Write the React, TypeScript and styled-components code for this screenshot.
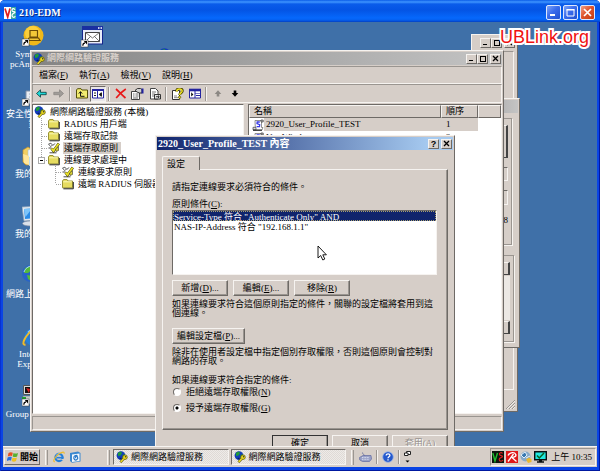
import React, { useState } from "react";
import styled, { createGlobalStyle, css } from "styled-components";

const FACE = "#d6cec8";
const DARK = "#6e6a66";
const SHADOW = "#9a9590";
const LIGHT = "#f6f3f0";
const NAVY = "#10246c";

const GlobalStyle = createGlobalStyle`
  *, *::before, *::after { box-sizing: border-box; }
  body { margin: 0; background: #fff; }
  body, button, input, select, table {
    font-family: "Liberation Serif", "Noto Sans CJK TC", serif;
    font-size: 9px;
    line-height: 12px;
    color: #000;
  }
  button { margin: 0; padding: 0; border: 0; background: none; }
  svg { display: block; flex: none; }
  p, ul, h1, h2 { margin: 0; padding: 0; }
`;

const raised = css`
  border: 1px solid;
  border-color: ${LIGHT} ${DARK} ${DARK} ${LIGHT};
`;
const sunken = css`
  border: 1px solid;
  border-color: ${DARK} ${LIGHT} ${LIGHT} ${DARK};
`;
const etched = css`
  border: 1px solid;
  border-color: ${SHADOW} ${LIGHT} ${LIGHT} ${SHADOW};
`;

/* ---------- remote viewer frame ---------- */

const Frame = styled.div`
  display: flex;
  flex-direction: column;
  min-height: 100vh;
  padding: 0 3px 4px;
  border-radius: 5px 5px 0 0;
  background: #0a44e4;
  box-shadow: inset 1px 0 #0831d0, inset -1px -1px #0018a0;
`;

const FrameTitle = styled.header`
  display: flex;
  align-items: center;
  gap: 3px;
  height: 22px;
  margin: 0 -3px;
  padding: 3px 5px 0 4px;
  border-radius: 5px 5px 0 0;
  background: linear-gradient(#0a5ce8 0, #3f95ff 2px, #0a5cea 4px, #0454e4 10px, #0668fc 18px, #0560f0 20px, #0340c0 22px);
`;

const FrameName = styled.h1`
  flex: 1;
  color: #fff;
  font-size: 10px;
  line-height: 14px;
  text-shadow: 1px 1px #0a2a80;
`;

const FrameButtons = styled.div`
  display: flex;
  gap: 2px;
`;

const FrameButton = styled.button<{ $close?: boolean }>`
  display: flex;
  align-items: center;
  justify-content: center;
  width: 15px;
  height: 15px;
  border: 1px solid #dfe8fc;
  border-radius: 2px;
  background: ${(p) =>
    p.$close
      ? "linear-gradient(135deg, #f0a088, #e0542c 45%, #c03c10)"
      : "linear-gradient(135deg, #7ea4f8, #3a6cec 45%, #2050d0)"};
`;

/* ---------- desktop ---------- */

const Desktop = styled.main`
  position: relative;
  flex: 1;
  overflow: hidden;
  background: #3f70a8;
`;

const IconColumn = styled.ul`
  display: flex;
  flex-direction: column;
  gap: 4px;
  width: 59px;
  padding: 3px 0 0 1px;
  list-style: none;
`;

const DesktopIcon = styled.li`
  display: flex;
  flex-direction: column;
  align-items: center;
  height: 56px;
  color: #fff;
  line-height: 10px;
  text-align: center;
  gap: 2px;
`;

const IconLabel = styled.span`
  width: 58px;
`;

const MailShortcut = styled.div`
  position: absolute;
  left: 78px;
  top: 4px;
`;

const HiddenShortcut = styled.div`
  position: absolute;
  left: 154px;
  top: 26px;
`;

const Watermark = styled.div`
  position: absolute;
  right: 8px;
  top: 4px;
  color: #f01010;
  font-family: "Liberation Sans", sans-serif;
  font-size: 18px;
  line-height: 22px;
  -webkit-text-stroke: 4px #fff;
  paint-order: stroke fill;
`;

/* ---------- classic windows ---------- */

const Win = styled.section<{ $x: number; $y: number; $w: number; $h?: number }>`
  position: absolute;
  left: ${(p) => p.$x}px;
  top: ${(p) => p.$y}px;
  width: ${(p) => p.$w}px;
  ${(p) => p.$h && `height: ${p.$h}px;`}
  display: flex;
  flex-direction: column;
  padding: 1px;
  background: ${FACE};
  border: 1px solid;
  border-color: ${LIGHT} ${DARK} ${DARK} ${LIGHT};
`;

const WinTitle = styled.header<{ $tone: "active" | "idle" | "plain" }>`
  display: flex;
  align-items: center;
  flex: none;
  height: 13px;
  padding: 0 1px;
  color: ${(p) => (p.$tone === "active" ? "#fff" : FACE)};
  background: ${(p) =>
    p.$tone === "active"
      ? `linear-gradient(90deg, ${NAVY}, #a6caf0 92%)`
      : p.$tone === "idle"
        ? "linear-gradient(90deg, #848484, #c4c4c4)"
        : FACE};
`;

const WinName = styled.h2`
  flex: 1;
  font-size: 10px;
  line-height: 13px;
  white-space: nowrap;
`;

const IdleName = styled(WinName)`
  padding-left: 2px;
  font-size: 9px;
`;

const Caption = styled.button<{ $gap?: boolean }>`
  display: flex;
  align-items: center;
  justify-content: center;
  width: 11px;
  height: 10px;
  margin-left: ${(p) => (p.$gap ? 2 : 0)}px;
  background: ${FACE};
  ${raised}
`;

const HelpCaption = styled(Caption)`
  font-family: "Liberation Sans", sans-serif;
  font-weight: bold;
  line-height: 8px;
`;

const MenuBar = styled.nav`
  display: flex;
  flex: none;
  height: 18px;
  margin-top: 1px;
  ${etched}
`;

const MenuItem = styled.button`
  padding: 0 5px 0 6px;
  white-space: nowrap;
`;

const ToolBar = styled.div`
  display: flex;
  align-items: center;
  flex: none;
  height: 19px;
  margin-bottom: 1px;
  ${etched}
`;

const Tool = styled.button<{ $on?: boolean }>`
  display: flex;
  align-items: center;
  justify-content: center;
  width: ${(p) => (p.$on ? 16 : 17)}px;
  height: 16px;
  ${(p) => p.$on && css`${sunken} background: #e9e6e8;`}
`;

const Divider = styled.span`
  width: 2px;
  height: 14px;
  margin: 0 2px;
  border-left: 1px solid ${SHADOW};
  border-right: 1px solid ${LIGHT};
`;

const Panes = styled.div`
  display: flex;
  flex: 1;
  gap: 4px;
  min-height: 0;
`;

const TreePane = styled.ul`
  flex: none;
  width: 212px;
  padding: 1px 0 0 1px;
  overflow: hidden;
  list-style: none;
  background: #fff;
  ${sunken}
`;

const TreeRow = styled.li`
  display: flex;
  align-items: center;
  height: 12px;
  white-space: nowrap;
`;

const TreeLabel = styled.span<{ $selected?: boolean }>`
  margin-left: 3px;
  padding: 0 3px 0 1px;
  background: ${(p) => (p.$selected ? FACE : "transparent")};
`;

const Indent = styled.span`
  width: 14px;
`;

const ListPane = styled.div`
  flex: 1;
  overflow: hidden;
  background: #fff;
  ${sunken}
`;

const Results = styled.table`
  width: 100%;
  table-layout: fixed;
  border-collapse: separate;
  border-spacing: 0;
  th {
    height: 13px;
    padding: 0 4px;
    font-weight: normal;
    line-height: 11px;
    text-align: left;
    background: ${FACE};
    ${raised}
  }
  td { height: 13px; padding: 0; line-height: 13px; white-space: nowrap; }
`;

const NameHead = styled.th` width: 192px; `;
const OrderHead = styled.th` width: 37px; `;

const NameCell = styled.div`
  display: flex;
  align-items: center;
  padding-left: 3px;
`;

const CellText = styled.div<{ $selected?: boolean; $inset?: boolean }>`
  flex: 1;
  overflow: hidden;
  padding-left: ${(p) => (p.$inset ? 5 : 2)}px;
  background: ${(p) => (p.$selected ? FACE : "transparent")};
`;

const StatusBar = styled.footer`
  flex: none;
  height: 14px;
  margin-top: 2px;
  ${etched}
`;

/* ---------- background windows ---------- */

const BackBody = styled.div`
  flex: 1;
  margin: 2px 2px 20px;
  ${etched}
`;

const GripCorner = styled.div`
  position: absolute;
  right: 2px;
  bottom: 2px;
`;

const Group = styled.div<{ $h: number; $end?: number }>`
  display: flex;
  flex-direction: column;
  align-items: flex-end;
  flex: none;
  gap: ${(p) => (p.$h > 100 ? 9 : 1)}px;
  height: ${(p) => p.$h}px;
  margin: 5px ${(p) => p.$end ?? 5}px 5px 0;
  padding: 6px 3px 0 0;
  border: 1px solid ${SHADOW};
  box-shadow: 1px 1px ${LIGHT};
`;

const FieldEdge = styled.div<{ $h: number; $kind: "button" | "field" | "track" }>`
  flex: none;
  width: 40px;
  height: ${(p) => p.$h}px;
  ${(p) => (p.$kind === "button" ? raised : sunken)}
  ${(p) => p.$kind === "button" && "border-right: 2px solid #444; border-bottom: 1px solid #444;"}
  ${(p) => p.$kind === "track" && "background: #ece8e4; border-color: #ece8e4;"}
`;

/* ---------- dialog ---------- */

const DialogBody = styled.div`
  display: flex;
  flex-direction: column;
  align-items: stretch;
  padding: 6px 5px 5px;
`;

const Tab = styled.button`
  position: relative;
  align-self: flex-start;
  width: 38px;
  height: 14px;
  margin-bottom: -1px;
  padding-left: 4px;
  text-align: left;
  background: ${FACE};
  border: 1px solid;
  border-color: ${LIGHT} ${DARK} transparent ${LIGHT};
  border-bottom: 0;
  border-radius: 2px 2px 0 0;
`;

const TabPage = styled.div`
  display: flex;
  flex-direction: column;
  padding: 11px 10px 15px 9px;
  ${raised}
  box-shadow: inset -1px -1px ${SHADOW};
`;

const Prompt = styled.p`
  margin-bottom: 5px;
`;

const ListBox = styled.select`
  appearance: none;
  display: block;
  width: 100%;
  height: 65px;
  margin: 0 0 5px;
  padding: 0;
  overflow: hidden;
  outline: none;
  border-radius: 0;
  background: #fff;
  ${sunken}
  option {
    display: flex;
    align-items: center;
    height: 10px;
    min-height: 0;
    padding: 0 1px;
    font-size: 9px;
  }
  option:checked {
    color: #fff;
    background: linear-gradient(${NAVY}, ${NAVY});
    outline: 1px dotted #a8a070;
    outline-offset: -1px;
  }
`;

const ButtonRow = styled.div`
  display: flex;
  gap: 5px;
`;

const PushButton = styled.button<{ $wide?: boolean; $main?: boolean }>`
  width: ${(p) => (p.$wide ? 73 : 56)}px;
  height: 16px;
  text-align: center;
  white-space: nowrap;
  background: ${FACE};
  ${raised}
  box-shadow: inset -1px -1px ${SHADOW};
  ${(p) => p.$main && "outline: 1px solid #333; outline-offset: -1px;"}
  &:disabled { color: ${SHADOW}; text-shadow: 1px 1px #fff; }
`;

const Note = styled.p<{ $after: number }>`
  margin: 4px 0 ${(p) => p.$after}px;
  line-height: 9px;
`;

const Choices = styled.fieldset`
  display: flex;
  flex-direction: column;
  gap: 4px;
  margin: 4px 0 0;
  padding: 0;
  border: 0;
  legend { padding: 0; }
`;

const Choice = styled.label`
  display: flex;
  align-items: center;
  gap: 5px;
  height: 12px;
  padding-left: 1px;
`;

const Radio = styled.input`
  appearance: none;
  width: 8px;
  height: 8px;
  margin: 0;
  border: 1px solid;
  border-color: ${DARK} #fff #fff ${DARK};
  border-radius: 50%;
  background: #fff;
  &:checked { background: radial-gradient(circle, #000 1px, #fff 2px); }
`;

const Footer = styled.footer`
  display: flex;
  justify-content: flex-end;
  gap: 4px;
  margin-top: 5px;
`;

const Pointer = styled.div`
  position: absolute;
  left: 314px;
  top: 223px;
`;

/* ---------- task bar ---------- */

const TaskBar = styled.footer`
  display: flex;
  align-items: center;
  flex: none;
  height: 21px;
  padding: 0 1px;
  background: ${FACE};
  border-top: 1px solid ${LIGHT};
`;

const StartButton = styled.button`
  display: flex;
  align-items: center;
  gap: 1px;
  width: 36px;
  height: 16px;
  padding-left: 2px;
  font-weight: bold;
  white-space: nowrap;
  ${raised}
`;

const Handle = styled.span`
  flex: none;
  width: 3px;
  height: 15px;
  margin: 0 3px 0 5px;
  border-left: 1px solid ${LIGHT};
  border-right: 1px solid ${SHADOW};
`;

const QuickLaunch = styled.div`
  display: flex;
  gap: 4px;
  width: 51px;
  padding-left: 2px;
`;

const Tasks = styled.div`
  display: flex;
  flex: 0 1 233px;
  gap: 2px;
`;

const TaskButton = styled.button`
  display: flex;
  align-items: center;
  flex: 1;
  gap: 3px;
  height: 16px;
  padding-left: 2px;
  white-space: nowrap;
  background: repeating-conic-gradient(#eeebe8 0 25%, #dfdad6 0 50%) 0 0 / 2px 2px;
  ${sunken}
`;

const IconButton = styled.button`
  display: flex;
`;

const LanguageBar = styled.div`
  display: flex;
  align-items: center;
  gap: 2px;
  padding-left: 2px;
`;

const Spacer = styled.span`
  flex: 1;
`;

const Tray = styled.div`
  display: flex;
  align-items: center;
  gap: 2px;
  height: 18px;
  padding: 0 3px 0 1px;
  white-space: nowrap;
  ${etched}
`;

const Clock = styled.time`
  margin-left: 2px;
`;

/* ---------- drawings ---------- */

const MinMark = () => (
  <svg width="7" height="7"><path d="M1 5h4v1H1z" fill="#000" /></svg>
);
const MaxMark = () => (
  <svg width="8" height="8"><path d="M1 1h6v1H1zM1 1h1v6H1zM6 1h1v6H6zM1 6h6v1H1z" fill="#000" /></svg>
);
const CloseMark = () => (
  <svg width="7" height="7"><path d="M1 1l5 5M6 1L1 6" stroke="#000" strokeWidth="1.3" /></svg>
);

const GlobeKey = ({ size = 12 }: { size?: number }) => (
  <svg width={size} height={size} viewBox="0 0 12 12">
    <circle cx="5" cy="4.6" r="4.4" fill="#123cb8" />
    <path d="M2 1.8L5 .6l1 1.6-1.5 2.2L2 5zM6.5 4l2.4-.8L9 5.5 7 7z" fill="#1f9c38" />
    <path d="M3 7.5l2-1 1 2z" fill="#0a1c60" />
    <circle cx="9" cy="6.2" r="2.3" fill="#e8d820" stroke="#5c5400" strokeWidth=".7" />
    <path d="M7.7 7.6L4.4 11.2" stroke="#5c5400" strokeWidth="2.4" />
    <path d="M7.8 7.5L4.6 11" stroke="#f0e030" strokeWidth="1.3" />
    <circle cx="9.6" cy="5.7" r=".7" fill="#333" />
  </svg>
);

const Folder = () => (
  <svg width="12" height="12" viewBox="0 0 12 12">
    <path d="M.5 3L1.5 1.5h3.5L6 3h4.5v6.8H.5z" fill="#e6dc60" stroke="#9a9434" />
    <path d="M1.2 3.8h8.6" stroke="#fbf8b8" />
    <path d="M11.3 4v6.8H1.4" stroke="#222" fill="none" />
  </svg>
);

const PolicyIcon = () => (
  <svg width="12" height="12" viewBox="0 0 12 12">
    <path d="M.5 2l2.5-.8 1.500 2-2 1.300z" fill="#fff" stroke="#444" strokeWidth=".8" />
    <path d="M.5 6h3M1.500 10.800h7" stroke="#333" strokeWidth=".9" />
    <path d="M3.500 6.500l2 2.500L10.800 1.500" fill="none" stroke="#4d4800" strokeWidth="2.800" />
    <path d="M3.600 6.600l1.900 2.200L10.600 1.700" fill="none" stroke="#ece428" strokeWidth="1.700" />
    <path d="M7.500 7l3-2.500v4l-2.500 1z" fill="#d8d030" stroke="#333" strokeWidth=".6" />
    <path d="M5 3.500l1.800-2" stroke="#222" strokeWidth=".9" />
  </svg>
);

const ScrollIcon = () => (
  <svg width="12" height="12" viewBox="0 0 12 12">
    <path d="M3 1.5h7.500l-1 1.500v5.500h1.500l-1 2.500H1.500l1.800-2z" fill="#fff" stroke="#777" strokeWidth=".8" />
    <path d="M9 1h2.200v2H9z" fill="#ccc" stroke="#333" strokeWidth=".7" />
    <path d="M1 8.300h3v2.500H1z" fill="#ddd" stroke="#444" strokeWidth=".7" />
    <path d="M7.800 3H5.200L5 4.500l2.700 1.200-.2 2H4.600" fill="none" stroke="#3a3ae8" strokeWidth="1.300" />
    <path d="M1 11.200h9" stroke="#111" />
  </svg>
);

const Branch = ({ last, box }: { last?: boolean; box?: boolean }) => (
  <svg width="14" height="12">
    <path d={`M7.5 0V${last ? 6 : 12}M8 6.5h6`} stroke="#a4a4a4" strokeDasharray="1 1" fill="none" />
    {box && (
      <g>
        <rect x="4.500" y="3.500" width="6" height="6" fill="#fff" stroke="#aaa" />
        <path d="M6 6.500h3" stroke="#000" />
      </g>
    )}
  </svg>
);

const ShortcutArrow = () => (
  <g>
    <rect x="0" y="14" width="7" height="7" fill="#fff" stroke="#333" strokeWidth=".5" />
    <path d="M1.800 19.800C1.800 17.500 2.800 17 4 16.800" fill="none" stroke="#000" strokeWidth="1.200" />
    <path d="M2.800 15h3.200v3.400z" fill="#000" />
  </g>
);

const PcIcon = () => (
  <svg width="22" height="22" viewBox="0 0 22 22">
    <circle cx="11.500" cy="10.500" r="10" fill="#f0b818" />
    <circle cx="10.500" cy="8.500" r="7.500" fill="#ffd84a" opacity=".7" />
    <path d="M8 5.500h7.500v6.500H8zM5.500 15.500L7 13h9.500l1.500 2.500z" fill="#f2c838" stroke="#6b4c08" strokeWidth="1.200" />
    <ShortcutArrow />
  </svg>
);

const MailIcon = () => (
  <svg width="22" height="22" viewBox="0 0 22 22">
    <rect x="1.500" y=".500" width="20" height="17.500" fill="#e8ecf8" stroke="#15258c" />
    <path d="M1 0h21v4H1z" fill="#1a2fa0" />
    <path d="M17 1.200h1.500v1.500H17zM19.500 1.200H21v1.500h-1.500z" fill="#fff" />
    <path d="M4.500 6.500h14v9h-14z" fill="#fff" stroke="#444" />
    <path d="M4.500 6.500l7 5.500 7-5.500M4.500 15.500l5-5M18.500 15.500l-5-5" fill="none" stroke="#555" strokeWidth=".8" />
    <ShortcutArrow />
  </svg>
);

const SecurityIcon = () => (
  <svg width="22" height="22" viewBox="0 0 22 22">
    <path d="M4 6h14v13H4z" fill="#e9edf3" stroke="#8090a8" />
    <path d="M7 9h8M7 12h8" stroke="#9aa8bc" />
    <ShortcutArrow />
  </svg>
);

const DocsIcon = () => (
  <svg width="22" height="22" viewBox="0 0 22 22">
    <path d="M1 5l5-3 3 2 9 2v13L4 20 1 17z" fill="#f2cf62" stroke="#c89428" strokeWidth=".7" />
    <path d="M6 5l11-3v14L6 19z" fill="#eef6fc" stroke="#9db8cc" strokeWidth=".5" />
    <path d="M1 9l6 2v9l-5-2z" fill="#ffe69a" />
    <path d="M7 12l11-2v9L7 21z" fill="#bcdcf0" />
  </svg>
);

const ComputerIcon = () => (
  <svg width="22" height="22" viewBox="0 0 22 22">
    <path d="M0 2l17-1-1 14L2 16z" fill="#e0e8f0" stroke="#8ea2b8" strokeWidth=".7" />
    <path d="M2 4l13-1-1 10-11 1z" fill="#2c8be6" />
    <path d="M2 4l8-.600L3.500 12z" fill="#7cc4fa" />
    <ellipse cx="8.500" cy="18.500" rx="8" ry="2.500" fill="#dce2ea" stroke="#8a94a4" strokeWidth=".6" />
  </svg>
);

const NetIcon = () => (
  <svg width="22" height="22" viewBox="0 0 22 22">
    <circle cx="8.500" cy="8.500" r="8.500" fill="#2862c8" />
    <path d="M3 3l5-2 2 4-4 3-4 0zM5 10l5 1-1 5-3-2z" fill="#54b83c" />
    <path d="M2 7c1-3 4-6 8-6" stroke="#a8d4fc" strokeWidth="1" fill="none" />
    <path d="M10 12h11v8H10z" fill="#cfdcec" stroke="#607890" />
  </svg>
);

const IeIcon = ({ size = 12 }: { size?: number }) => (
  <svg width={size} height={size} viewBox="0 0 22 22">
    <circle cx="11" cy="12" r="6.600" fill="none" stroke="#2480dc" strokeWidth="4" />
    <path d="M7 12.200h12" stroke="#2480dc" strokeWidth="3" />
    <path d="M13 14.500h8l-1.500 3z" fill={size > 12 ? "#3f70a8" : FACE} />
    <path d="M6 7.500c1.500-2 4-3 6.500-2.700" stroke="#8cc8fa" strokeWidth="1.500" fill="none" />
    <path d="M3.500 19.500C-2 21 4 9 11 5s10-4 9.500 0" fill="none" stroke="#f0bc28" strokeWidth="2" />
  </svg>
);

const GroupIcon = () => (
  <svg width="22" height="22" viewBox="0 0 22 22">
    <path d="M1.500.500h15v9h-15z" fill="#d8d8d8" stroke="#555" />
    <path d="M3 2h12v6H3z" fill="#111" />
    <path d="M4 3l4 1-1 4z" fill="#e02020" />
    <path d="M1 11h18v8H1z" fill="#c8ccc8" stroke="#777" strokeWidth=".5" />
    <path d="M0 13h4" stroke="#20a030" strokeWidth="2" />
    <ShortcutArrow />
  </svg>
);

const Arrow = ({ flip, off }: { flip?: boolean; off?: boolean }) => (
  <svg width="11" height="9" viewBox="0 0 11 9">
    <path
      d={flip ? "M10.500 4.500L6.500.800v2.500H.800v2.400h5.700v2.500z" : "M.500 4.500L4.500.800v2.500h5.700v2.400H4.500v2.500z"}
      fill={off ? "#a09c98" : "#20d8d8"}
      stroke={off ? "#8c8884" : "#083838"}
      strokeWidth=".8"
    />
  </svg>
);

const UpFolder = () => (
  <svg width="12" height="11" viewBox="0 0 12 11">
    <path d="M.500 2L1.500.700h3.500L6 2h5.500v8H.500z" fill="#f2ec70" stroke="#55500a" />
    <path d="M4.500 4v4.300H8.500M2.800 5.600l1.700-2 1.700 2" fill="none" stroke="#111" />
  </svg>
);

const TreeToggle = () => (
  <svg width="12" height="11" viewBox="0 0 12 11">
    <path d="M.500 1.500h11v8.500H.500z" fill="#fff" stroke="#2424a0" />
    <path d="M0 1h12v2H0z" fill="#2424a0" />
    <path d="M5.500 3v7" stroke="#2424a0" />
    <path d="M2 5h2M2 7.500h2M9.500 4.500v4" stroke="#222" />
    <path d="M9 4.500L6.800 6.500 9 8.500z" fill="#111" />
  </svg>
);

const PanelIcon = () => (
  <svg width="12" height="11" viewBox="0 0 12 11">
    <path d="M.500 1.500h11v8.500H.500z" fill="#fff" stroke="#2424a0" />
    <path d="M0 1h12v2H0zM6 5.500h5" fill="#2424a0" stroke="#2424a0" strokeWidth=".6" />
    <path d="M6 3v7M7 7.500h4" stroke="#2424a0" />
    <path d="M2.200 4.300l2.200 2.200-2.200 2z" fill="#111" />
  </svg>
);

const DeleteIcon = () => (
  <svg width="12" height="11" viewBox="0 0 12 11">
    <path d="M1 1c3 2.500 6 6 9.500 9M10.800 1C7 3.500 3.500 7 1.200 10" fill="none" stroke="#e81818" strokeWidth="1.700" />
  </svg>
);

const PropsIcon = () => (
  <svg width="13" height="12" viewBox="0 0 13 12">
    <path d="M.500 3.500h8v8h-8z" fill="#fff" stroke="#444" />
    <path d="M2 6h1.500M4.500 6h3M2 8h1.500M4.500 8h3M2 10h5" stroke="#444" strokeWidth=".8" />
    <path d="M4 2.500L6.500.500h3l1.500 1v3.500H8.500L6 4z" fill="#d0d0d0" stroke="#222" strokeWidth=".9" />
    <path d="M10.500.500h2v5h-2z" fill="#2222a0" />
  </svg>
);

const ExportIcon = () => (
  <svg width="12" height="12" viewBox="0 0 12 12">
    <path d="M1.500.500h5l2.500 2.500v8h-7.500z" fill="#fff" stroke="#444" />
    <path d="M3 4h4M3 6h3M3 8h3" stroke="#555" strokeWidth=".8" />
    <path d="M5.500 6.500h6v4.500h-6z" fill="#ddd" stroke="#222" strokeWidth=".9" />
    <path d="M7 8.700h3M9 7.500l1.300 1.200L9 10" stroke="#111" strokeWidth=".8" fill="none" />
  </svg>
);

const HelpIcon = () => (
  <svg width="12" height="12" viewBox="0 0 12 12">
    <path d="M.500 2.500h7v9h-7z" fill="#fff" stroke="#333" />
    <path d="M2 8h3M2 9.700h4" stroke="#666" strokeWidth=".8" />
    <path d="M4.500 3.600C4.500-.400 11-.200 10.300 3.300 10 4.800 7.600 5 7.600 7" fill="none" stroke="#444000" strokeWidth="2.700" />
    <path d="M4.700 3.500C4.700.300 10.500.300 10.100 3.200 9.800 4.600 7.600 5 7.600 7" fill="none" stroke="#f0e428" strokeWidth="1.500" />
    <circle cx="7.600" cy="9.200" r="1.200" fill="#f0e428" stroke="#444000" strokeWidth=".6" />
  </svg>
);

const MoveMark = ({ down }: { down?: boolean }) => (
  <svg width="8" height="7" viewBox="0 0 8 7">
    <path
      d={down ? "M4 6.800L7.300 3H5.300V.500H2.700V3H.700z" : "M4 .200L.700 4h2v2.500h2.600V4h2z"}
      fill={down ? "#000" : "#8c8884"}
    />
  </svg>
);

const ViewerLogo = () => (
  <svg width="12" height="12" viewBox="0 0 12 12">
    <path d="M0 0h7v12H0z" fill="#fff" />
    <path d="M7 0h5v12H7z" fill="#3aa8a0" />
    <path d="M1 1.500l2.700 8.500L6 1.500" fill="none" stroke="#e02020" strokeWidth="1.700" />
    <path d="M11 2.800C10 .800 7.800 1.500 8 3.500s3 .500 3 1.800c0 1-3 .8-3 3s2.300 2.600 3.300 1" fill="none" stroke="#fff" strokeWidth="1.200" />
  </svg>
);

const FlagIcon = () => (
  <svg width="12" height="12" viewBox="0 0 12 12">
    <path d="M1.500 2c1.500-1 3-1 4.300-.2L5 5.300C3.700 4.600 2.300 4.700.800 5.500z" fill="#e85020" />
    <path d="M6.500 2c1.500.8 3 .7 4.500-.1l-.900 3.600c-1.500.7-3 .7-4.400 0z" fill="#58b030" />
    <path d="M.600 6.400C2 5.700 3.500 5.600 4.800 6.200L4 9.800C2.700 9 1.200 9.200-.200 10z" fill="#2870e0" />
    <path d="M5.500 6.500c1.500.7 3 .7 4.400 0L9 10.100c-1.500.8-3 .7-4.300 0z" fill="#f0c020" />
  </svg>
);

const OutlookIcon = () => (
  <svg width="12" height="12" viewBox="0 0 12 12">
    <path d="M1 2l8-1.500 2.500 1.500v8.500L3 11.700 1 10z" fill="#3a88d0" />
    <path d="M3 3.500l7.500-1v7.500L3 11z" fill="#f4f8fc" />
    <path d="M8.500 4.500C5 3.500 4 7 5.500 8.500s4-.500 3-2.500-2.700 0-1.500 1" fill="none" stroke="#2878c8" strokeWidth="1.200" />
  </svg>
);

const KeyboardIcon = () => (
  <svg width="13" height="12" viewBox="0 0 13 12">
    <path d="M4 1.500c-2 1 2 1.500 1.500 4" fill="none" stroke="#7078a0" />
    <path d="M.500 6.500L4 4.500h8l.500 3.500-2 2.500H3.500L.800 9z" fill="#9aa2c8" stroke="#6068a0" strokeWidth=".7" />
    <path d="M3 6.500h7M3 8.300h7" stroke="#e4e8f8" strokeWidth=".8" strokeDasharray="1 .6" />
  </svg>
);

const HelpBall = () => (
  <svg width="12" height="12" viewBox="0 0 12 12">
    <circle cx="6" cy="6" r="5.300" fill="#2458cc" stroke="#98b4e8" strokeWidth=".8" />
    <path d="M4.200 4.500c0-2.300 3.800-2.200 3.700 0C7.800 5.800 6 5.800 6 7.300M6 8.300v1.300" fill="none" stroke="#fff" strokeWidth="1.300" />
  </svg>
);

const RestoreMenu = () => (
  <svg width="8" height="14" viewBox="0 0 8 14">
    <path d="M2.500 1.500h4v3h-4z" fill="#fff" stroke="#222" />
    <path d="M.500 3h3.500v2.500H.500z" fill="#fff" stroke="#222" />
    <path d="M1.500 10.500h4l-2 2z" fill="#000" />
  </svg>
);

const ViewerTray = () => (
  <svg width="12" height="12" viewBox="0 0 12 12">
    <path d="M0 0h12v12H0z" fill="#0c140c" />
    <path d="M.800 2L3 10l2.500-8" fill="none" stroke="#20c030" strokeWidth="1.400" />
    <path d="M10.500 2.500C9.500.800 7 1.800 7.500 3.500s3 .500 3 2S7 6.200 7.200 8.500s3 2 3.800.500" fill="none" stroke="#d82020" strokeWidth="1.200" />
  </svg>
);

const AviraTray = () => (
  <svg width="12" height="12" viewBox="0 0 12 12">
    <path d="M0 0h12v12H0z" fill="#e01818" />
    <path d="M2 4.500C4 1 8.500.800 9.800 3.500 10.500 5.500 8 6.500 5.500 6.300" fill="none" stroke="#fff" strokeWidth="1.400" />
    <path d="M7.500 3L2 10.500M6 6.500l4.500 4" stroke="#fff" strokeWidth="1.300" />
  </svg>
);

const GlobeTray = () => (
  <svg width="12" height="12" viewBox="0 0 12 12">
    <circle cx="5.500" cy="5.500" r="5" fill="#88aac8" />
    <path d="M1 4l4-3 2 3-3 3zM6 7l4-2" stroke="#e4f0fa" fill="#3878b0" />
    <path d="M6 8.500l3-2 2.500 1.500v3L8 12z" fill="#e8b830" />
  </svg>
);

const MonitorTray = () => (
  <svg width="13" height="12" viewBox="0 0 13 12">
    <path d="M.700.700h11.600v8H.700z" fill="#20e8e0" stroke="#0a1010" strokeWidth="1.400" />
    <path d="M3 4.500l2.300 2.500L10 2" fill="none" stroke="#086020" strokeWidth="1.500" />
    <path d="M3 11h7M5 9.500h3" stroke="#0a1010" strokeWidth="1.600" />
  </svg>
);

const CursorArrow = () => (
  <svg width="11" height="17" viewBox="0 0 11 17">
    <path d="M1 1v12l2.700-2.500L5.800 15l2-1-2-4.200h3.600z" fill="#fff" stroke="#000" strokeWidth=".9" />
  </svg>
);

const SizeGrip = () => (
  <svg width="9" height="9">
    <path d="M0 9L9 0M3 9l6-6M6 9l3-3" stroke={SHADOW} />
    <path d="M1 9l8-8M4 9l5-5M7 9l2-2" stroke="#fff" strokeWidth=".6" />
  </svg>
);

/* ---------- data ---------- */

const desktopIcons = [
  { icon: <PcIcon />, label: "Symantec pcAnywhere" },
  { icon: <SecurityIcon />, label: "安全性設定精靈" },
  { icon: <DocsIcon />, label: "我的文件" },
  { icon: <ComputerIcon />, label: "我的電腦" },
  { icon: <NetIcon />, label: "網路上的芳鄰" },
  { icon: <IeIcon size={22} />, label: "Internet Explorer" },
  { icon: <GroupIcon />, label: "Group Policy..." },
];

const menus = [["檔案", "F"], ["執行", "A"], ["檢視", "V"], ["說明", "H"]];

const Key = ({ k }: { k: string }) => <>(<u>{k}</u>)</>;

function CaptionSet() {
  return (
    <>
      <Caption aria-label="最小化"><MinMark /></Caption>
      <Caption aria-label="最大化"><MaxMark /></Caption>
      <Caption $gap aria-label="關閉"><CloseMark /></Caption>
    </>
  );
}

function BackWindows() {
  return (
    <>
      <Win $x={468} $y={12} $w={47} $h={378}>
        <WinTitle $tone="plain"><Spacer /><CaptionSet /></WinTitle>
        <BackBody />
        <GripCorner><SizeGrip /></GripCorner>
      </Win>
      <Win $x={440} $y={76} $w={77} $h={250}>
        <WinTitle $tone="idle" />
        <Group $h={127} $end={6}>
          <FieldEdge $kind="button" $h={33} />
          <FieldEdge $kind="field" $h={14} />
          <FieldEdge $kind="field" $h={15} />
          <span>8</span>
        </Group>
        <Group $h={87} $end={4}>
          <FieldEdge $kind="button" $h={13} />
          <FieldEdge $kind="track" $h={44} />
          <FieldEdge $kind="button" $h={13} />
        </Group>
      </Win>
    </>
  );
}

function ConsoleWindow() {
  return (
    <Win $x={27} $y={28} $w={474} $h={382}>
      <WinTitle $tone="idle">
        <GlobeKey />
        <IdleName>網際網路驗證服務</IdleName>
        <CaptionSet />
      </WinTitle>
      <MenuBar>
        {menus.map(([name, k]) => (
          <MenuItem key={k}>{name}<Key k={k} /></MenuItem>
        ))}
      </MenuBar>
      <ToolBar>
        <Tool aria-label="上一步"><Arrow /></Tool>
        <Tool aria-label="下一步"><Arrow flip off /></Tool>
        <Divider />
        <Tool aria-label="上一層"><UpFolder /></Tool>
        <Tool $on aria-label="顯示樹狀目錄"><TreeToggle /></Tool>
        <Divider />
        <Tool aria-label="刪除"><DeleteIcon /></Tool>
        <Tool aria-label="內容"><PropsIcon /></Tool>
        <Tool aria-label="匯出"><ExportIcon /></Tool>
        <Divider />
        <Tool aria-label="說明"><HelpIcon /></Tool>
        <Tool aria-label="面板"><PanelIcon /></Tool>
        <Divider />
        <Tool aria-label="上移"><MoveMark /></Tool>
        <Tool aria-label="下移"><MoveMark down /></Tool>
      </ToolBar>
      <Panes>
        <TreePane>
          <TreeRow><GlobeKey /><TreeLabel>網際網路驗證服務 (本機)</TreeLabel></TreeRow>
          <TreeRow><Branch /><Folder /><TreeLabel>RADIUS 用戶端</TreeLabel></TreeRow>
          <TreeRow><Branch /><Folder /><TreeLabel>遠端存取記錄</TreeLabel></TreeRow>
          <TreeRow><Branch /><PolicyIcon /><TreeLabel $selected>遠端存取原則</TreeLabel></TreeRow>
          <TreeRow><Branch last box /><Folder /><TreeLabel>連線要求處理中</TreeLabel></TreeRow>
          <TreeRow><Indent /><Branch /><PolicyIcon /><TreeLabel>連線要求原則</TreeLabel></TreeRow>
          <TreeRow><Indent /><Branch last /><Folder /><TreeLabel>遠端 RADIUS 伺服器群組</TreeLabel></TreeRow>
        </TreePane>
        <ListPane>
          <Results>
            <thead>
              <tr><NameHead>名稱</NameHead><OrderHead>順序</OrderHead><th aria-label="其他" /></tr>
            </thead>
            <tbody>
              <tr>
                <td><NameCell><ScrollIcon /><CellText $selected>2920_User_Profile_TEST</CellText></NameCell></td>
                <td><CellText $selected $inset>1</CellText></td>
                <td />
              </tr>
              <tr>
                <td><NameCell><ScrollIcon /><CellText>Use Windows</CellText></NameCell></td>
                <td><CellText $inset>2</CellText></td>
                <td />
              </tr>
            </tbody>
          </Results>
        </ListPane>
      </Panes>
      <StatusBar />
    </Win>
  );
}

function ProfileDialog() {
  const [grant, setGrant] = useState(true);
  return (
    <Win $x={152} $y={113} $w={300} role="dialog" aria-label="2920_User_Profile_TEST 內容">
      <WinTitle $tone="active">
        <WinName>2920_User_Profile_TEST 內容</WinName>
        <HelpCaption aria-label="說明">?</HelpCaption>
        <Caption $gap aria-label="關閉"><CloseMark /></Caption>
      </WinTitle>
      <DialogBody>
        <Tab>設定</Tab>
        <TabPage>
          <Prompt>請指定連線要求必須符合的條件。</Prompt>
          <label htmlFor="conditions">原則條件<Key k="C" />:</label>
          <ListBox id="conditions" size={6} defaultValue="service">
            <option value="service">Service-Type 符合 "Authenticate Only" AND</option>
            <option value="nas">NAS-IP-Address 符合 "192.168.1.1"</option>
          </ListBox>
          <ButtonRow>
            <PushButton>新增<Key k="D" />...</PushButton>
            <PushButton>編輯<Key k="E" />...</PushButton>
            <PushButton>移除<Key k="R" /></PushButton>
          </ButtonRow>
          <Note $after={10}>如果連線要求符合這個原則指定的條件，關聯的設定檔將套用到這個連線。</Note>
          <PushButton $wide>編輯設定檔<Key k="P" />...</PushButton>
          <Note $after={4}>除非在使用者設定檔中指定個別存取權限，否則這個原則會控制對網路的存取。</Note>
          <Choices>
            <legend>如果連線要求符合指定的條件:</legend>
            <Choice>
              <Radio type="radio" name="access" checked={!grant} onChange={() => setGrant(false)} />
              <span>拒絕遠端存取權限<Key k="N" /></span>
            </Choice>
            <Choice>
              <Radio type="radio" name="access" checked={grant} onChange={() => setGrant(true)} />
              <span>授予遠端存取權限<Key k="G" /></span>
            </Choice>
          </Choices>
        </TabPage>
        <Footer>
          <PushButton $main>確定</PushButton>
          <PushButton>取消</PushButton>
          <PushButton disabled>套用<Key k="A" /></PushButton>
        </Footer>
      </DialogBody>
    </Win>
  );
}

export default function App() {
  return (
    <>
      <GlobalStyle />
      <Frame>
        <FrameTitle>
          <ViewerLogo />
          <FrameName>210-EDM</FrameName>
          <FrameButtons>
            <FrameButton aria-label="最小化">
              <svg width="9" height="9"><path d="M1 6h5v2H1z" fill="#fff" /></svg>
            </FrameButton>
            <FrameButton aria-label="最大化">
              <svg width="9" height="9"><path d="M1 1.500h7v6.500H1z" fill="none" stroke="#fff" /><path d="M.500 1h8v1.500h-8z" fill="#fff" /></svg>
            </FrameButton>
            <FrameButton $close aria-label="關閉">
              <svg width="9" height="9"><path d="M1 1l7 7M8 1L1 8" stroke="#fff" strokeWidth="1.700" /></svg>
            </FrameButton>
          </FrameButtons>
        </FrameTitle>
        <Desktop>
          <IconColumn>
            {desktopIcons.map(({ icon, label }) => (
              <DesktopIcon key={label}>{icon}<IconLabel>{label}</IconLabel></DesktopIcon>
            ))}
          </IconColumn>
          <MailShortcut><MailIcon /></MailShortcut>
          <HiddenShortcut><GlobeKey size={18} /></HiddenShortcut>
          <BackWindows />
          <ConsoleWindow />
          <ProfileDialog />
          <Watermark>UBLink.org</Watermark>
          <Pointer><CursorArrow /></Pointer>
        </Desktop>
        <TaskBar>
          <StartButton><FlagIcon />開始</StartButton>
          <Handle />
          <QuickLaunch>
            <IconButton aria-label="Internet Explorer"><IeIcon /></IconButton>
            <IconButton aria-label="Outlook Express"><OutlookIcon /></IconButton>
          </QuickLaunch>
          <Handle />
          <Tasks>
            <TaskButton><GlobeKey />網際網路驗證服務</TaskButton>
            <TaskButton><GlobeKey />網際網路驗證服務</TaskButton>
          </Tasks>
          <Handle />
          <LanguageBar>
            <IconButton aria-label="鍵盤"><KeyboardIcon /></IconButton>
            <Divider />
            <IconButton aria-label="說明"><HelpBall /></IconButton>
            <Divider />
            <IconButton aria-label="還原"><RestoreMenu /></IconButton>
          </LanguageBar>
          <Spacer />
          <Tray>
            <ViewerTray />
            <AviraTray />
            <GlobeTray />
            <MonitorTray />
            <Clock>上午 10:35</Clock>
          </Tray>
        </TaskBar>
      </Frame>
    </>
  );
}
